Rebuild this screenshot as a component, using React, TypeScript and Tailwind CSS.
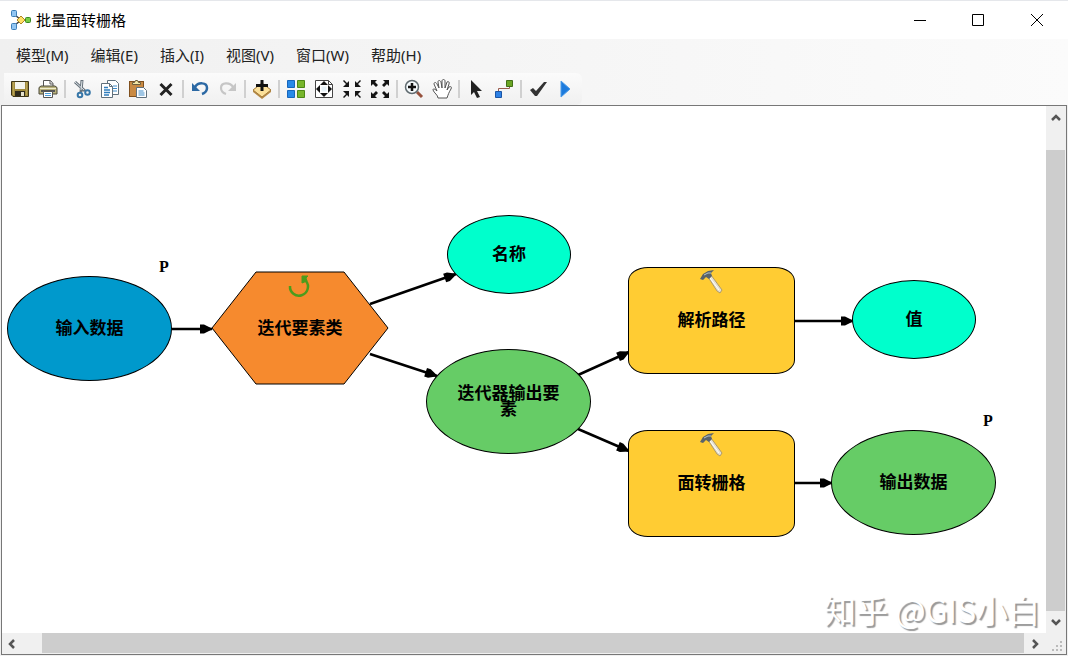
import React from 'react';

type IconProps = { children: React.ReactNode };

const Icon: React.FC<IconProps> = ({ children }) => (
  <svg viewBox="0 0 20 20" className="h-5 w-5" fill="none" aria-hidden="true">
    {children}
  </svg>
);

const arrowsIn = 'M1 2l1-1 3 3 2-2v6H1l2-2 1-1zM19 2l-1-1-3 3-2-2v6h6l-2-2-1-1zM1 18l1 1 3-3 2 2v-6H1l2 2 1 1zM19 18l-1 1-3-3-2 2v-6h6l-2 2-1 1z';
const arrowsOut = 'M1 1h6L5 3l3 3-2 2-3-3-2 2zM19 1v6l-2-2-3 3-2-2 3-3-2-2zM1 19v-6l2 2 3-3 2 2-3 3 2 2zM19 19h-6l2-2-3-3 2-2 3 3 2-2z';

const groups: { label: string; icon: React.ReactNode }[][] = [
  [
    {
      label: '保存',
      icon: (
        <Icon>
          <path d="M1.500 2.500h17v15H3l-1.500-1.500z" fill="#a08a3c" stroke="#3d3518" />
          <path d="M5 3h10v7H5z" fill="#f4f4ec" />
          <path d="M5 12h10v5H5z" fill="#2f2b1c" />
          <path d="M11 13h3v4h-3z" fill="#e6e2cc" />
          <path d="M3.500 3v13M16.500 3v13" stroke="#b8a356" />
        </Icon>
      ),
    },
    {
      label: '打印',
      icon: (
        <Icon>
          <path d="M5.500 8V1.500h7l2.500 3V8" fill="#fff" stroke="#555" />
          <path d="M12 2v3h3" stroke="#555" />
          <path d="M1 8.500l2-1.500h14l2 1.500v6.500H1z" fill="#b9b27c" stroke="#4a4938" />
          <path d="M2 9.500h16" stroke="#efeccd" />
          <path d="M3 12h14" stroke="#555" strokeWidth="2" />
          <path d="M5.500 12.500h9v6h-9z" fill="#fff" stroke="#555" />
          <path d="M7 14.500h6M7 16.500h6" stroke="#4b9ad4" />
        </Icon>
      ),
    },
  ],
  [
    {
      label: '剪切',
      icon: (
        <Icon>
          <path d="M3 3l10 9M10 1l-1 12" stroke="#68737c" strokeWidth="3" />
          <path d="M3 3l9 8M10 2l-1 9" stroke="#dfe5e9" />
          <circle cx="8" cy="16" r="2.300" stroke="#3877a8" strokeWidth="2" />
          <circle cx="15.500" cy="13.500" r="2.300" stroke="#3877a8" strokeWidth="2" />
        </Icon>
      ),
    },
    {
      label: '复制',
      icon: (
        <Icon>
          <path d="M7.500 1.500h8l3 3v11h-11z" fill="#fff" stroke="#60707c" />
          <path d="M13 7h4M13 9.500h4M13 12h4" stroke="#3f8cc9" />
          <path d="M1.500 4.500h8l3 3v11h-11z" fill="#fff" stroke="#60707c" />
          <path d="M9.500 4.500v3h3" stroke="#60707c" />
          <path d="M4 8.500h4M4 11h6M4 13.500h6M4 16h5" stroke="#2f7dbd" strokeWidth="1.500" />
        </Icon>
      ),
    },
    {
      label: '粘贴',
      icon: (
        <Icon>
          <rect x="1.500" y="2.500" width="14" height="15" fill="#c98a43" stroke="#80501e" />
          <path d="M4.500 5.500v-2h2l1-2h2l1 2h2v2z" fill="#f3e6a5" stroke="#6c6040" />
          <path d="M8.500 8.500h7l3 3v7h-10z" fill="#fff" stroke="#60707c" />
          <path d="M10.500 12h5M10.500 14h6M10.500 16h6" stroke="#3f8cc9" />
        </Icon>
      ),
    },
    {
      label: '删除',
      icon: (
        <Icon>
          <path d="M4.500 5l11 11M15.500 5l-11 11" stroke="#222" strokeWidth="3" />
        </Icon>
      ),
    },
  ],
  [
    {
      label: '撤消',
      icon: (
        <Icon>
          <path d="M5 8c3-5 12-5 12 1 0 3-2 5-5 6" stroke="#2c69a4" strokeWidth="2.500" />
          <path d="M2 4v8h8z" fill="#2c69a4" />
        </Icon>
      ),
    },
    {
      label: '恢复',
      icon: (
        <Icon>
          <path d="M15 8C12 3 3 3 3 9c0 3 2 5 5 6" stroke="#c6c6c6" strokeWidth="2.200" />
          <path d="M18 4v8h-8z" fill="#c6c6c6" />
        </Icon>
      ),
    },
  ],
  [
    {
      label: '添加数据或工具',
      icon: (
        <Icon>
          <path d="M1 11l9-7 9 7v2l-9 7-9-7z" fill="#b58a45" />
          <path d="M1 11l9-7 9 7-9 7z" fill="#fbe09a" stroke="#a57c3e" />
          <path d="M10 1v11M4 6.500h12" stroke="#111" strokeWidth="3" />
        </Icon>
      ),
    },
  ],
  [
    {
      label: '自动布局',
      icon: (
        <Icon>
          <path d="M1.500 1.500h7v7h-7zM1.500 11.500h7v7h-7z" fill="#2789e7" stroke="#1765bb" />
          <path d="M11.500 1.500h7v7h-7zM11.500 11.500h7v7h-7z" fill="#77b52b" stroke="#4c8616" />
        </Icon>
      ),
    },
    {
      label: '全图',
      icon: (
        <Icon>
          <path d="M1.500 1.500h13l4 4v13h-17z" fill="#fff" stroke="#444" />
          <path d="M14.500 1.500v4h4" stroke="#444" />
          <path d="M10 2l4 4H6zM10 18l4-4H6zM2 10l4-4v8zM18 10l-4-4v8z" fill="#111" />
          <path d="M7.500 7.500h5v5h-5z" fill="#e7f2f8" />
        </Icon>
      ),
    },
    {
      label: '固定比例缩小',
      icon: <Icon><path d={arrowsIn} fill="#151515" /></Icon>,
    },
    {
      label: '固定比例放大',
      icon: <Icon><path d={arrowsOut} fill="#151515" /></Icon>,
    },
  ],
  [
    {
      label: '放大',
      icon: (
        <Icon>
          <path d="M13 13l5 5" stroke="#96513d" strokeWidth="3" />
          <circle cx="8" cy="8" r="6.500" fill="#f6fbfd" stroke="#606b70" strokeWidth="1.500" />
          <path d="M8 4v8M4 8h8" stroke="#111" strokeWidth="2.500" />
        </Icon>
      ),
    },
    {
      label: '平移',
      icon: (
        <Icon>
          <path
            d="M6 19c0-3-4-5-5-8 0-2 2-1 4 1L2 5c0-2 2-2 3 0l2 4-1-6c0-2 2-2 3 0l1 6V2c0-2 3-2 3 0v7l2-6c1-1 3 0 2 2l-2 6 2-3c2-1 3 0 2 2-2 3-3 6-4 9z"
            fill="#fff"
            stroke="#555"
          />
        </Icon>
      ),
    },
  ],
  [
    {
      label: '选择',
      icon: (
        <Icon>
          <path d="M5 1v15l3-3 3 6 3-1-3-6h5z" fill="#222" />
        </Icon>
      ),
    },
    {
      label: '连接',
      icon: (
        <Icon>
          <path d="M4.500 13V9.500h11V6" stroke="#9a5c50" />
          <path d="M1.500 12.500h6v6h-6z" fill="#2d80e4" stroke="#1a55a5" />
          <path d="M12.500 1.500h6v6h-6z" fill="#6aa524" stroke="#426f17" />
        </Icon>
      ),
    },
  ],
  [
    {
      label: '验证整个模型',
      icon: (
        <Icon>
          <path d="M2 11l3-2 3 3 8-9h3L9 17H7z" fill="#333" />
        </Icon>
      ),
    },
    {
      label: '运行',
      icon: (
        <Icon>
          <path d="M5 2l9 8-9 8z" fill="#1d7bdd" stroke="#4b9be8" />
        </Icon>
      ),
    },
  ],
];

const menus = ['模型(M)', '编辑(E)', '插入(I)', '视图(V)', '窗口(W)', '帮助(H)'];

// Connectors between nodes: start x/y, end x/y
const links = [
  [170, 223, 210, 223],
  [368, 198, 454, 168],
  [368, 248, 435, 270],
  [576, 269, 627, 246],
  [576, 323, 627, 345],
  [792, 215, 851, 215],
  [792, 377, 830, 377],
];

const labelClass = 'max-w-[110px] text-center text-[17px] leading-4 font-bold';

const Ellipse: React.FC<{ label: string; className: string }> = ({ label, className }) => (
  <div className={`absolute flex items-center justify-center rounded-[50%] border border-black ${className}`}>
    <span className={labelClass}>{label}</span>
  </div>
);

const Tool: React.FC<{ label: string; className: string }> = ({ label, className }) => (
  <div
    className={`absolute flex h-[107px] w-[167px] items-center justify-center rounded-[20px/14px] border border-black bg-[#ffcc33] ${className}`}
  >
    <svg viewBox="0 0 24 24" className="absolute top-0.5 h-6 w-6" aria-hidden="true">
      <path d="M8 7l3-2 11 15-2 3-3-2z" fill="#e4e0d2" stroke="#b09a68" />
      <path d="M10 8l9 12" stroke="#fff" />
      <path d="M0 9l3-5 5-3 6-1-3 3 1 3-3 3-3-2-3 3z" fill="#59636a" />
      <path d="M4 5l4-2h3" stroke="#b4c5cc" fill="none" />
    </svg>
    <span className={labelClass}>{label}</span>
  </div>
);

const Chevron: React.FC<{ d: string }> = ({ d }) => (
  <svg viewBox="0 0 12 12" className="h-3 w-3" fill="none" stroke="#555" strokeWidth="2.500" aria-hidden="true">
    <path d={d} />
  </svg>
);

const Diagram = () => (
  <div className="relative min-w-0 flex-1 overflow-hidden bg-white font-['Liberation_Serif','Noto_Sans_CJK_SC',serif] text-black">
    <svg className="absolute inset-0 h-full w-full" aria-hidden="true">
      <defs>
        <marker id="head" markerUnits="userSpaceOnUse" markerWidth="14" markerHeight="10" refX="13" refY="5" orient="auto">
          <path d="M1 0.500h4l9 4.500-9 4.500H1z" />
        </marker>
      </defs>
      {links.map(([x1, y1, x2, y2]) => (
        <line key={`${x1}-${y1}`} x1={x1} y1={y1} x2={x2} y2={y2} stroke="#000" strokeWidth="2.500" markerEnd="url(#head)" />
      ))}
    </svg>

    <Ellipse label="输入数据" className="left-[5px] top-[170px] h-[105px] w-[165px] bg-[#0099cc]" />
    <span className="absolute left-[157px] top-[152px] text-base leading-[18px] font-bold">P</span>

    <div className="absolute left-[209px] top-[165px] flex h-[115px] w-[178px] items-center justify-center">
      <svg viewBox="0 0 178 115" className="absolute inset-0 h-full w-full" aria-hidden="true">
        <path d="M1 57L45 1h88l44 56-44 56H45z" fill="#f68a2e" stroke="#000" />
        <path d="M79 15a9 9 0 1 0 16-5" fill="none" stroke="#4c9c1c" strokeWidth="2.500" />
        <path d="M91 5h6l-2 2 1 3-5 2z" fill="#4c9c1c" stroke="#4c9c1c" />
      </svg>
      <span className={`relative ${labelClass}`}>迭代要素类</span>
    </div>

    <Ellipse label="名称" className="left-[445px] top-[109px] h-[79px] w-[124px] bg-[#00ffcc]" />
    <Ellipse label="迭代器输出要素" className="left-[424px] top-[243px] h-[105px] w-[165px] bg-[#66cc66]" />
    <Tool label="解析路径" className="left-[626px] top-[161px]" />
    <Tool label="面转栅格" className="left-[626px] top-[324px]" />
    <Ellipse label="值" className="left-[850px] top-[174px] h-[79px] w-[124px] bg-[#00ffcc]" />
    <Ellipse label="输出数据" className="left-[829px] top-[324px] h-[105px] w-[165px] bg-[#66cc66]" />
    <span className="absolute left-[981px] top-[306px] text-base leading-[18px] font-bold">P</span>

    <span className="absolute right-1.5 bottom-1.5 font-['Noto_Sans_CJK_SC',sans-serif] text-[32px] leading-9 whitespace-nowrap text-white [text-shadow:2px_2px_1px_#999]">
      知乎 @GIS小白
    </span>
  </div>
);

export default function App() {
  return (
    <div className="flex h-screen flex-col bg-[#f0f0f0] font-['Noto_Sans','Noto_Sans_CJK_SC',sans-serif] text-[15px] text-black">
      {/* Title bar */}
      <header className="flex h-[39px] shrink-0 items-center border-t border-gray-200 bg-white pl-[10px]">
        <svg viewBox="0 0 22 20" className="mr-1 h-5 w-[22px]" fill="none" aria-hidden="true">
          <path d="M5 5l6 5-6 5M10 10h8" stroke="#444" strokeWidth="1.500" />
          <rect x="1.500" y=".5" width="5" height="6" rx="1" fill="#93c6f2" stroke="#3d7fb9" />
          <rect x="1.500" y="13.500" width="5" height="6" rx="1" fill="#93c6f2" stroke="#3d7fb9" />
          <path d="M11 6l4 4-4 4-4-4z" fill="#ffdf65" stroke="#ae8622" />
          <rect x="15.500" y="7.500" width="5" height="5" rx="1" fill="#77cc43" stroke="#388923" />
        </svg>
        <h1 className="flex-1">批量面转栅格</h1>
        <button aria-label="最小化" className="flex h-full w-[58px] items-center justify-center">
          <svg viewBox="0 0 12 12" className="h-3 w-3" stroke="#000"><path d="M0 6.500h12" /></svg>
        </button>
        <button aria-label="最大化" className="flex h-full w-[58px] items-center justify-center">
          <svg viewBox="0 0 12 12" className="h-3 w-3" fill="none" stroke="#000"><path d="M.5.5h11v11H.5z" /></svg>
        </button>
        <button aria-label="关闭" className="mr-px flex h-full w-[60px] items-center justify-center">
          <svg viewBox="0 0 12 12" className="h-3 w-3" stroke="#000"><path d="M0 0l12 12M12 0L0 12" /></svg>
        </button>
      </header>

      <div className="shrink-0 bg-linear-to-r from-[#f0f0f0] to-[#fbfbfb]">
        <nav className="flex h-[34px] items-center pb-0.5 pl-[5px] text-[#222]">
          {menus.map((menu) => (
            <button key={menu} className="px-[11px]">{menu}</button>
          ))}
        </nav>

        <div className="ml-1 flex h-8 w-fit items-center rounded-r-md bg-linear-to-b from-[#fbfbfb] to-[#f0f0f0] px-0.5">
          {groups.map((group, i) => (
            <div key={group[0].label} className="flex items-center">
              {i > 0 && <span className="mx-0.5 h-[18px] w-0.5 bg-[#d0d0d0]" />}
              {group.map(({ label, icon }) => (
                <button key={label} aria-label={label} className="flex h-7 w-7 items-center justify-center">
                  {icon}
                </button>
              ))}
            </div>
          ))}
        </div>
      </div>

      {/* Model canvas with its scroll bars */}
      <main className="mx-px mb-px flex min-h-0 flex-1 flex-col border border-[#777]">
        <div className="flex min-h-0 flex-1">
          <Diagram />
          <div className="mr-px flex w-[19px] flex-col bg-[#f0f0f0]">
            <button aria-label="向上滚动" className="flex h-11 justify-center pt-1.5"><Chevron d="M2 8l4-4 4 4" /></button>
            <div className="flex-1 bg-[#cdcdcd]" />
            <button aria-label="向下滚动" className="flex h-[22px] items-center justify-center"><Chevron d="M2 4l4 4 4-4" /></button>
          </div>
        </div>
        <div className="flex h-[21px] bg-[#f0f0f0]">
          <button aria-label="向左滚动" className="flex w-10 items-center pl-1"><Chevron d="M8 2L4 6l4 4" /></button>
          <div className="mb-px flex-1 bg-[#cdcdcd]" />
          <button aria-label="向右滚动" className="flex w-[22px] items-center justify-center"><Chevron d="M4 2l4 4-4 4" /></button>
          <svg viewBox="0 0 20 20" className="h-5 w-5" fill="#bbb" aria-hidden="true">
            <path d="M14 8h2v2h-2zM10 12h2v2h-2zM14 12h2v2h-2zM6 16h2v2H6zM10 16h2v2h-2zM14 16h2v2h-2z" />
          </svg>
        </div>
      </main>
    </div>
  );
}
